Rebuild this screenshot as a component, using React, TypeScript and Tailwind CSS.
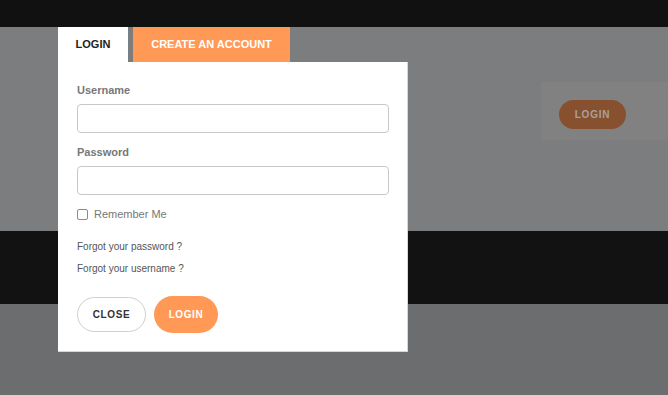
export default function App() {
  return (
    <div
      className="relative h-[395px] w-[668px] overflow-hidden"
      style={{ fontFamily: '"Liberation Sans", Arial, sans-serif' }}
    >
      {/* dimmed page behind the modal */}
      <div className="h-[27px] bg-[#111111]" />
      <div className="flex h-[204px] justify-end bg-[#7c7d7f] pt-[55px]">
        <div className="h-[58px] w-[127px] bg-[#818181] pl-[18px] pt-[18px]">
          <div className="flex h-[29px] w-[67px] items-center justify-center rounded-full bg-[#87502f] text-[10px] font-bold tracking-[0.08em] text-[#a7a19c]">
            LOGIN
          </div>
        </div>
      </div>
      <div className="h-[73px] bg-[#121212]" />
      <div className="h-[91px] bg-[#6c6d6f]" />

      {/* modal */}
      <div className="absolute left-[58px] top-[27px] w-[350px]">
        <div className="flex gap-[5px]">
          <div className="flex h-[35px] w-[70px] items-center justify-center bg-white text-[11px] font-bold text-[#222]">
            LOGIN
          </div>
          <div className="flex h-[35px] w-[157px] items-center justify-center bg-[#ff9955] text-[11px] font-bold text-white">
            CREATE AN ACCOUNT
          </div>
        </div>
        <div className="h-[290px] border-b border-r border-[#d6d6d6] bg-white pl-[19px] pr-[18px] pt-[21px]">
          <div className="text-[11px] font-bold leading-[14px] text-[#777]">Username</div>
          <input className="mt-[7px] block h-[29px] w-[312px] rounded-[4px] border border-[#c8c8c8] outline-none" />
          <div className="mt-[12px] text-[11px] font-bold leading-[14px] text-[#777]">Password</div>
          <input
            type="password"
            className="mt-[7px] block h-[29px] w-[312px] rounded-[4px] border border-[#c8c8c8] outline-none"
          />
          <label className="mt-[12px] flex items-center gap-[6px] text-[11px] leading-[14px] text-[#777]">
            <span className="block h-[11px] w-[11px] rounded-[2px] border border-[#8a8a8a]" />
            Remember Me
          </label>
          <div className="mt-[19px] text-[10px] leading-[14px] text-[#555]">Forgot your password ?</div>
          <div className="mt-[8px] text-[10px] leading-[14px] text-[#555]">Forgot your username ?</div>
          <div className="mt-[20px] flex items-center gap-[8px]">
            <button className="flex h-[35px] w-[69px] items-center justify-center rounded-full border border-[#cfcfcf] bg-white text-[10px] font-bold tracking-[0.06em] text-[#333]">
              CLOSE
            </button>
            <button className="flex h-[37px] w-[64px] items-center justify-center rounded-full bg-[#ff9955] text-[10px] font-bold tracking-[0.06em] text-white">
              LOGIN
            </button>
          </div>
        </div>
      </div>
    </div>
  );
}
